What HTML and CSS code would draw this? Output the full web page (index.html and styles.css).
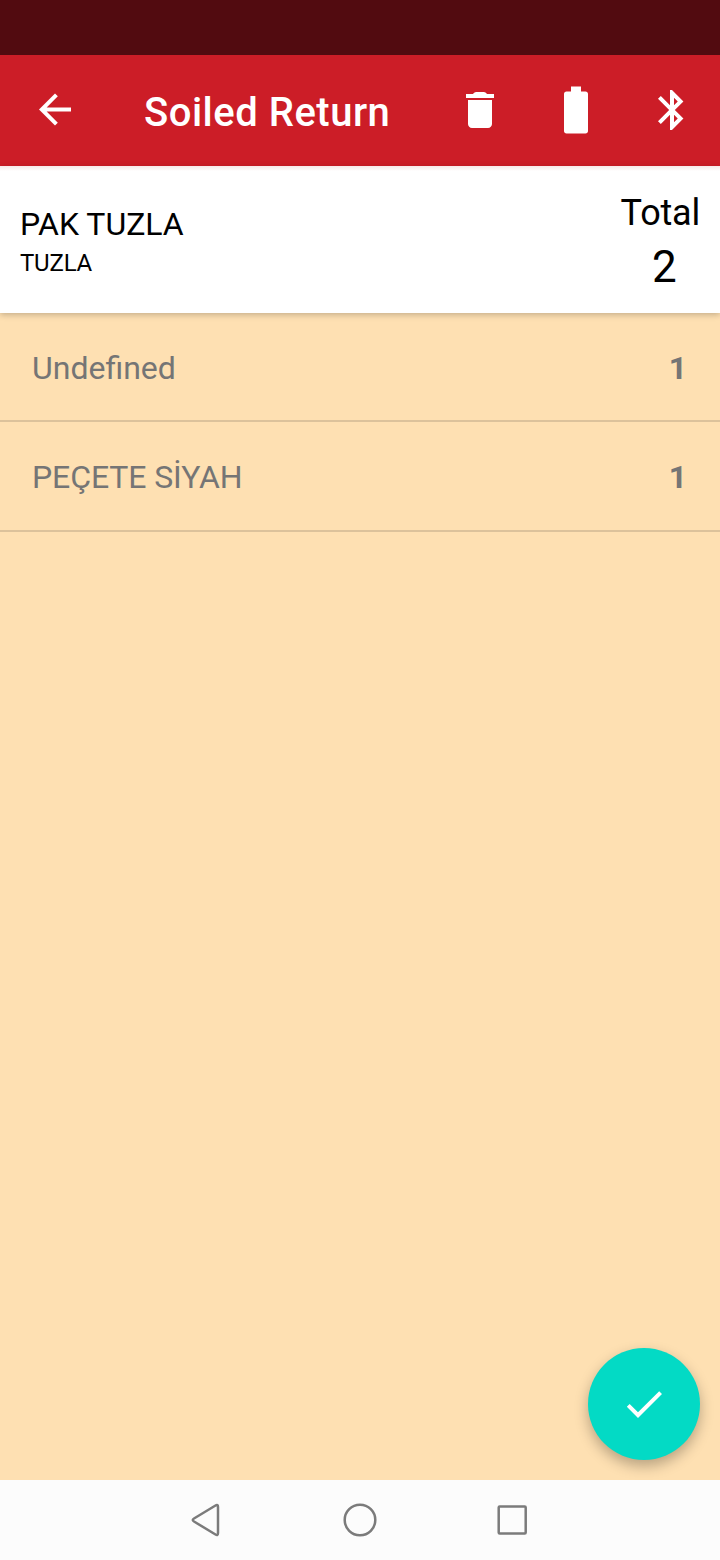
FILE: index.html
```html
<!DOCTYPE html>
<html lang="en">
<head>
<meta charset="utf-8">
<title>Soiled Return</title>
<link rel="stylesheet" href="styles.css">
</head>
<body>
<div class="screen">
  <div class="status-bar"></div>
  <header class="toolbar">
    <svg class="icon back" viewBox="0 0 24 24"><path d="M20 10.750H7.830l5.590-5.590L12 3.750l-8 8 8 8 1.410-1.410L7.830 12.750H20v-2z"/></svg>
    <h1 class="title">Soiled Return</h1>
    <div class="actions">
      <svg class="icon" viewBox="0 0 48 48"><path d="M12 38c0 2.200 1.800 4 4 4h16c2.200 0 4-1.800 4-4V14H12zM38 8h-7c-1.500-2-3-2-4-2h-6c-1 0-2.500 0-4 2h-7v4h28z"/></svg>
      <svg class="icon" viewBox="0 0 48 48"><path d="M33.500 5.500H29v-5h-10v5h-4.500C13 5.500 12 6.500 12 8v37c0 1.500 1 2.500 2.500 2.500h19c1.500 0 2.500-1 2.500-2.500V8c0-1.500-1-2.500-2.500-2.500z"/></svg>
      <svg class="icon" viewBox="0 0 24 24"><path d="M17.710 7.710 12 2h-1v7.590L6.410 5 5 6.410 10.590 12 5 17.590 6.410 19 11 14.410V22h1l5.710-5.710-4.300-4.290 4.300-4.290zM13 5.830l1.880 1.880L13 9.590V5.830zm1.880 10.460L13 18.170v-3.760l1.880 1.880z"/></svg>
    </div>
  </header>
  <section class="summary">
    <div class="customer"><div class="name">PAK TUZLA</div><div class="branch">TUZLA</div></div>
    <div class="total"><div class="total-label">Total</div><div class="total-value">2</div></div>
  </section>
  <main class="list">
    <div class="row"><span>Undefined</span><span class="count">1</span></div>
    <div class="row row-last"><span>PEÇETE SİYAH</span><span class="count">1</span></div>
    <button class="fab" aria-label="Confirm"><svg class="check" viewBox="0 0 24 24"><path d="M9 16.170 4.830 12l-1.420 1.410L9 19 21 7l-1.410-1.410z"/></svg></button>
  </main>
  <nav class="nav-bar">
    <svg viewBox="0 0 36 36"><path d="M28 5v26q0 3-2.500 1.500L4 19.500Q1.500 18 4 16.500L25.500 3.500Q28 2 28 5z"/></svg>
    <svg viewBox="0 0 36 36"><circle cx="18" cy="18" r="15.300"/></svg>
    <svg viewBox="0 0 36 36"><rect x="4.700" y="4.500" width="27" height="27" rx="1"/></svg>
  </nav>
</div>
</body>
</html>
```
FILE: styles.css
```css
* { box-sizing: border-box; }
body { margin: 0; font-family: Roboto, sans-serif; }
.screen { width: 720px; height: 1560px; display: flex; flex-direction: column; background: #fee0b2; overflow: hidden; }
.status-bar { height: 55px; background: #520b10; }
.toolbar { height: 111px; padding: 0 24px 2px 31px; display: flex; align-items: center; background: #cc1d27; color: #fff; }
.icon { width: 48px; height: 48px; fill: #fff; display: block; }
.title { margin: 6px 0 0 65px; font-size: 40px; line-height: 48px; font-weight: 500; letter-spacing: .5px; }
.actions { margin-left: auto; display: flex; gap: 48px; }
.summary { height: 147px; padding: 0 20px; display: flex; justify-content: space-between; background: linear-gradient(#f6e9e9, #fff 5px); color: #000; box-shadow: 0 2px 6px rgba(0,0,0,.22); }
.name { margin-top: 38px; font-size: 32px; line-height: 40px; }
.branch { font-size: 24px; line-height: 38px; letter-spacing: -.2px; }
.total { padding-top: 25px; text-align: center; }
.total-label { font-size: 36px; line-height: 44px; letter-spacing: -.2px; }
.total-value { padding-left: 8px; font-size: 44px; line-height: 64px; }
.list { flex: 1; position: relative; }
.row { height: 109px; padding: 2px 33px 0 32px; display: flex; align-items: center; justify-content: space-between; border-bottom: 2px solid #dcc29b; color: #757575; font-size: 32px; }
.row-last { height: 110px; letter-spacing: -.1px; }
.count { font-weight: 700; }
.fab { position: absolute; right: 20px; bottom: 20px; width: 112px; height: 112px; padding: 0; border: 0; border-radius: 50%; display: grid; place-items: center; background: #03dac5; box-shadow: 0 6px 14px rgba(0,0,0,.28); }
.check { width: 48px; height: 48px; fill: #fff; }
.nav-bar { height: 80px; padding: 0 190px; display: flex; align-items: center; justify-content: space-between; background: #fcfcfc; }
.nav-bar svg { width: 36px; height: 36px; fill: none; stroke: #7b7b7b; stroke-width: 2.500; stroke-linejoin: round; }
```
